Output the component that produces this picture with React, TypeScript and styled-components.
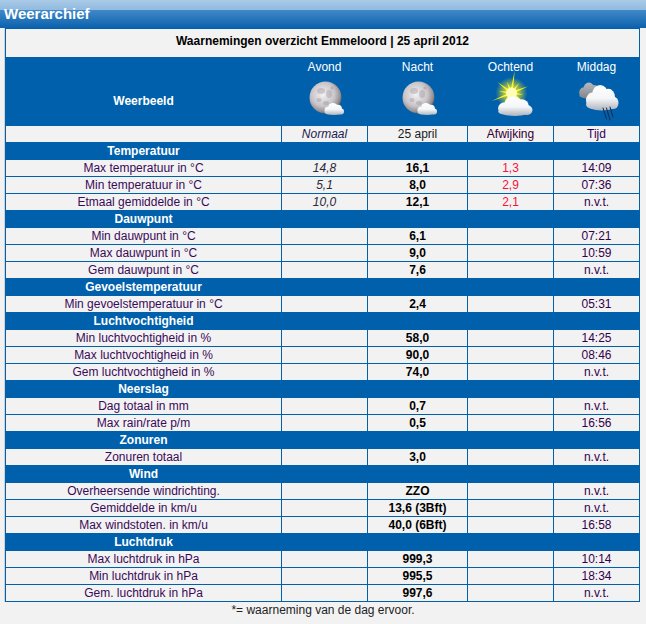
import React from "react";
import styled, { createGlobalStyle } from "styled-components";

const GlobalStyle = createGlobalStyle`
  html, body { margin: 0; padding: 0; background: #f2f2f2; }
  body { font-family: "Liberation Sans", Arial, sans-serif; font-size: 12px; }
`;

const Page = styled.div`
  width: 646px;
`;

const TitleBar = styled.div`
  height: 28px;
  box-sizing: border-box;
  padding: 0 0 0 4px;
  background: linear-gradient(to bottom, #aacbe7 0px, #90badf 10px, #4189c8 10px, #0b62ae 28px);
  color: #fff;
  font-weight: bold;
  font-size: 15px;
  line-height: 28px;
`;

const Table = styled.div`
  display: grid;
  grid-template-columns: 275px 85px 99px 85px 85px;
  grid-template-rows: 28px 67px;
  grid-auto-rows: 16px;
  gap: 1px;
  width: 635px;
  box-sizing: border-box;
  margin-left: 5px;
  border: 1px solid #0060ac;
  background: #0060ac;
  box-shadow: -1px 0 0 #d2d2d2;
`;

const Caption = styled.div`
  grid-column: 1 / -1;
  box-sizing: border-box;
  padding-top: 4px;
  background: #f2f2f2;
  text-align: center;
  font-weight: bold;
  line-height: 16px;
  color: #000;
`;

const HeadRow = styled.div`
  grid-column: 1 / -1;
  display: grid;
  grid-template-columns: 275px 85px 99px 85px 85px;
  gap: 1px;
  background: #0060ac;
`;

const Weerbeeld = styled.div`
  display: flex;
  align-items: center;
  justify-content: center;
  padding-top: 18px;
  color: #fff;
  font-weight: bold;
  line-height: 16px;
`;

const Period = styled.div`
  display: flex;
  flex-direction: column;
  align-items: center;
  padding-top: 1px;
  color: #fff;
  line-height: 16px;
  svg { display: block; }
`;

const SubCell = styled.div<{ $italic?: boolean; $color?: string }>`
  background: #f2f2f2;
  text-align: center;
  line-height: 16px;
  font-style: ${(p) => (p.$italic ? "italic" : "normal")};
  color: ${(p) => p.$color ?? "#330055"};
`;

const SectionRow = styled.div`
  grid-column: 1 / -1;
  background: #0060ac;
  display: flex;
`;

const SectionTitle = styled.div`
  width: 275px;
  text-align: center;
  color: #fff;
  font-weight: bold;
  line-height: 16px;
`;

const Label = styled.div`
  background: #f2f2f2;
  text-align: center;
  line-height: 16px;
  color: #3a0a58;
  white-space: nowrap;
`;

type Kind = "normaal" | "value" | "afw" | "tijd";

const Value = styled.div<{ $kind: Kind }>`
  background: #f2f2f2;
  text-align: center;
  line-height: 16px;
  white-space: nowrap;
  font-weight: ${(p) => (p.$kind === "value" ? "bold" : "normal")};
  font-style: ${(p) => (p.$kind === "normaal" ? "italic" : "normal")};
  color: ${(p) =>
    p.$kind === "value" ? "#000" : p.$kind === "afw" ? "#f5143c" : p.$kind === "normaal" ? "#2a2a3a" : "#33004d"};
`;

const Footnote = styled.div`
  width: 646px;
  text-align: center;
  line-height: 16px;
  color: #222;
`;

/* ---------- icons ---------- */

const Cloud: React.FC<{ id: string; x: number; y: number; s: number; sy?: number; gray?: boolean }> = ({
  id,
  x,
  y,
  s,
  sy,
  gray,
}) => (
  <g transform={`translate(${x} ${y}) scale(${s} ${sy ?? s})`}>
    <defs>
      <linearGradient id={id} x1="0" y1="0" x2="0" y2="12" gradientUnits="userSpaceOnUse">
        {gray ? (
          <>
            <stop offset="0" stopColor="#b8bcc0" />
            <stop offset="1" stopColor="#808488" />
          </>
        ) : (
          <>
            <stop offset="0" stopColor="#ffffff" />
            <stop offset="0.55" stopColor="#f4f6f8" />
            <stop offset="1" stopColor="#aeb4bc" />
          </>
        )}
      </linearGradient>
    </defs>
    <g fill={`url(#${id})`}>
      <circle cx="5" cy="7.5" r="3.6" />
      <circle cx="9.5" cy="5" r="4.6" />
      <circle cx="14.2" cy="6" r="3.8" />
      <circle cx="17.2" cy="8.6" r="2.8" />
      <ellipse cx="10.5" cy="9.4" rx="9" ry="2.6" />
    </g>
  </g>
);

const MoonIcon: React.FC<{ id: string }> = ({ id }) => (
  <svg width="48" height="46" viewBox="0 0 48 46">
    <defs>
      <radialGradient id={`${id}m`} cx="0.42" cy="0.4" r="0.62">
        <stop offset="0" stopColor="#f4f2f4" />
        <stop offset="0.6" stopColor="#c8c4c8" />
        <stop offset="0.88" stopColor="#938e92" />
        <stop offset="1" stopColor="#5a5658" />
      </radialGradient>
    </defs>
    <circle cx="24.5" cy="22.5" r="16" fill={`url(#${id}m)`} />
    <g fill="#857f84" opacity="0.3">
      <ellipse cx="20" cy="16" rx="4" ry="3" />
      <ellipse cx="28" cy="19" rx="3" ry="4" />
      <ellipse cx="18" cy="25" rx="2.5" ry="2" />
      <ellipse cx="25" cy="28" rx="3" ry="2" />
      <circle cx="31" cy="13" r="1.6" />
    </g>
    <Cloud id={`${id}c`} x={22} y={27.5} s={1.05} />
  </svg>
);

const rays = [24, 13, 18, 12, 21, 13, 18, 12, 22, 13, 18, 12];
const starPoints = Array.from({ length: 24 }, (_, i) => {
  const a = ((i * 15 - 90 + 8) * Math.PI) / 180;
  const r = i % 2 === 0 ? rays[i / 2] : 4;
  return `${(24.5 + r * Math.cos(a)).toFixed(2)},${(18 + r * Math.sin(a)).toFixed(2)}`;
}).join(" ");

const SunIcon: React.FC<{ id: string }> = ({ id }) => (
  <svg width="48" height="46" viewBox="0 0 48 46" style={{ overflow: "visible" }}>
    <defs>
      <radialGradient id={`${id}g`} cx="0.5" cy="0.5" r="0.5">
        <stop offset="0" stopColor="#ffff80" stopOpacity="1" />
        <stop offset="0.5" stopColor="#f8f020" stopOpacity="0.6" />
        <stop offset="1" stopColor="#f0e800" stopOpacity="0" />
      </radialGradient>
      <radialGradient id={`${id}s`} cx="24.5" cy="18" r="24" gradientUnits="userSpaceOnUse">
        <stop offset="0" stopColor="#ffffff" />
        <stop offset="0.25" stopColor="#fff830" />
        <stop offset="0.7" stopColor="#f4ec00" />
        <stop offset="1" stopColor="#e0e000" stopOpacity="0.4" />
      </radialGradient>
    </defs>
    <circle cx="24.5" cy="18" r="16" fill={`url(#${id}g)`} />
    <polygon points={starPoints} fill={`url(#${id}s)`} />
    <circle cx="24.5" cy="18" r="5.5" fill="#ffffb8" />
    <Cloud id={`${id}c`} x={8.5} y={20.5} s={1.85} sy={1.7} />
  </svg>
);

const RainIcon: React.FC<{ id: string }> = ({ id }) => (
  <svg width="48" height="46" viewBox="0 0 48 46">
    <Cloud id={`${id}g`} x={4.5} y={7} s={1.2} sy={1.4} gray />
    <Cloud id={`${id}w`} x={10.5} y={9} s={1.75} sy={2.2} />
    <g stroke="#1c2a48" strokeWidth="1" strokeLinecap="round">
      <line x1="30" y1="33" x2="33.5" y2="44" />
      <line x1="33.5" y1="33" x2="37" y2="45" />
      <line x1="37" y1="32" x2="40" y2="42" />
    </g>
  </svg>
);

/* ---------- data ---------- */

type Row = { label: string; normaal?: string; value: string; afw?: string; tijd: string };
type Section = { title: string; rows: Row[] };

const sections: Section[] = [
  {
    title: "Temperatuur",
    rows: [
      { label: "Max temperatuur in °C", normaal: "14,8", value: "16,1", afw: "1,3", tijd: "14:09" },
      { label: "Min temperatuur in °C", normaal: "5,1", value: "8,0", afw: "2,9", tijd: "07:36" },
      { label: "Etmaal gemiddelde in °C", normaal: "10,0", value: "12,1", afw: "2,1", tijd: "n.v.t." },
    ],
  },
  {
    title: "Dauwpunt",
    rows: [
      { label: "Min dauwpunt in °C", value: "6,1", tijd: "07:21" },
      { label: "Max dauwpunt in °C", value: "9,0", tijd: "10:59" },
      { label: "Gem dauwpunt in °C", value: "7,6", tijd: "n.v.t." },
    ],
  },
  {
    title: "Gevoelstemperatuur",
    rows: [{ label: "Min gevoelstemperatuur in °C", value: "2,4", tijd: "05:31" }],
  },
  {
    title: "Luchtvochtigheid",
    rows: [
      { label: "Min luchtvochtigheid in %", value: "58,0", tijd: "14:25" },
      { label: "Max luchtvochtigheid in %", value: "90,0", tijd: "08:46" },
      { label: "Gem luchtvochtigheid in %", value: "74,0", tijd: "n.v.t." },
    ],
  },
  {
    title: "Neerslag",
    rows: [
      { label: "Dag totaal in mm", value: "0,7", tijd: "n.v.t." },
      { label: "Max rain/rate p/m", value: "0,5", tijd: "16:56" },
    ],
  },
  {
    title: "Zonuren",
    rows: [{ label: "Zonuren totaal", value: "3,0", tijd: "n.v.t." }],
  },
  {
    title: "Wind",
    rows: [
      { label: "Overheersende windrichting.", value: "ZZO", tijd: "n.v.t." },
      { label: "Gemiddelde in km/u", value: "13,6 (3Bft)", tijd: "n.v.t." },
      { label: "Max windstoten. in km/u", value: "40,0 (6Bft)", tijd: "16:58" },
    ],
  },
  {
    title: "Luchtdruk",
    rows: [
      { label: "Max luchtdruk in hPa", value: "999,3", tijd: "10:14" },
      { label: "Min luchtdruk in hPa", value: "995,5", tijd: "18:34" },
      { label: "Gem. luchtdruk in hPa", value: "997,6", tijd: "n.v.t." },
    ],
  },
];

export default function App() {
  return (
    <Page>
      <GlobalStyle />
      <TitleBar>Weerarchief</TitleBar>
      <Table>
        <Caption>Waarnemingen overzicht Emmeloord | 25 april 2012</Caption>
        <HeadRow>
          <Weerbeeld>Weerbeeld</Weerbeeld>
          <Period>
            Avond
            <MoonIcon id="ia" />
          </Period>
          <Period>
            Nacht
            <MoonIcon id="in" />
          </Period>
          <Period>
            Ochtend
            <SunIcon id="io" />
          </Period>
          <Period>
            Middag
            <RainIcon id="im" />
          </Period>
        </HeadRow>
        <SubCell />
        <SubCell $italic $color="#1a1a50">Normaal</SubCell>
        <SubCell $color="#1a1a1a">25 april</SubCell>
        <SubCell $color="#330033">Afwijking</SubCell>
        <SubCell $color="#330055">Tijd</SubCell>
        {sections.map((s) => (
          <React.Fragment key={s.title}>
            <SectionRow>
              <SectionTitle>{s.title}</SectionTitle>
            </SectionRow>
            {s.rows.map((r) => (
              <React.Fragment key={r.label}>
                <Label>{r.label}</Label>
                <Value $kind="normaal">{r.normaal ?? ""}</Value>
                <Value $kind="value">{r.value}</Value>
                <Value $kind="afw">{r.afw ?? ""}</Value>
                <Value $kind="tijd">{r.tijd}</Value>
              </React.Fragment>
            ))}
          </React.Fragment>
        ))}
      </Table>
      <Footnote>*= waarneming van de dag ervoor.</Footnote>
    </Page>
  );
}
